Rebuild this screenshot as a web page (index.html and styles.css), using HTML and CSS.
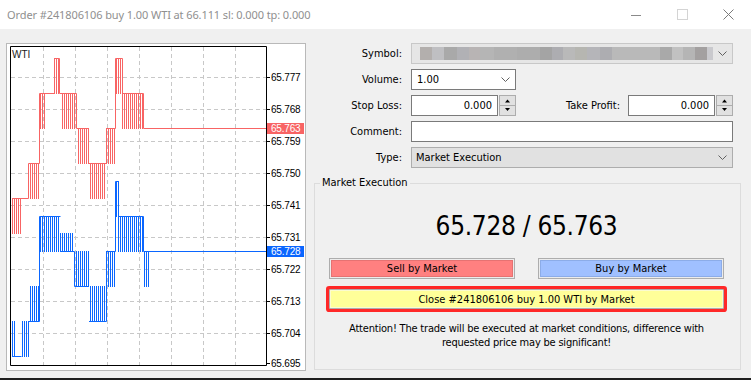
FILE: index.html
```html
<!DOCTYPE html>
<html lang="en">
<head>
  <meta charset="UTF-8">
  <title>Order #241806106</title>
  <link rel="stylesheet" href="styles.css">
</head>
<body>

<div class="titlebar">
  <span class="title">Order #241806106 buy 1.00 WTI at 66.111 sl: 0.000 tp: 0.000</span>
  <div class="caption-buttons">
    <span class="caption-btn"><svg width="10" height="10" viewBox="0 0 10 10"><path d="M0 5.5h10" stroke="#8a8a8a"/></svg></span>
    <span class="caption-btn"><svg width="11" height="11" viewBox="0 0 11 11"><rect x="0.5" y="0.5" width="10" height="10" fill="none" stroke="#d4d4d4"/></svg></span>
    <span class="caption-btn"><svg width="11" height="11" viewBox="0 0 11 11"><path d="M0.5 0.5l10 10M10.5 0.5l-10 10" stroke="#7a7a7a"/></svg></span>
  </div>
</div>

<div class="main">
  <!-- tick chart -->
  <div class="chart-panel">
    <svg width="298" height="326" viewBox="7 44 298 326">
      <defs>
        <pattern id="askBars" width="2" height="2" patternUnits="userSpaceOnUse"><rect width="1" height="2" fill="#f86464"/></pattern>
        <pattern id="bidBars" width="2" height="2" patternUnits="userSpaceOnUse"><rect width="1" height="2" fill="#0a66ff"/></pattern>
      </defs>
      <path class="grid" d="M43.5 47V365M75.5 47V365M107.5 47V365M139.5 47V365M171.5 47V365M203.5 47V365M235.5 47V365M11 77.5H266M11 109.5H266M11 141.5H266M11 173.5H266M11 205.5H266M11 237.5H266M11 269.5H266M11 301.5H266M11 333.5H266"/>

      <g fill="url(#askBars)">
        <rect x="12" y="198" width="10" height="36"/>
        <rect x="29" y="163" width="10" height="36"/>
        <rect x="40" y="93" width="6" height="36"/>
        <rect x="54" y="58" width="5" height="36"/>
        <rect x="62" y="93" width="14" height="36"/>
        <rect x="77" y="128" width="12" height="36"/>
        <rect x="89" y="163" width="17" height="36"/>
        <rect x="106" y="128" width="9" height="36"/>
        <rect x="115" y="58" width="7" height="36"/>
        <rect x="122" y="93" width="21" height="36"/>
      </g>
      <path class="ask-line" d="M12 198.5H28.5V163.5H39.5V93.5H54.5V58.5H59.5V93.5H76.5V128.5H88.5V163.5H106.5V128.5H115.5V58.5H122.5V93.5H143.5V128.5H267"/>

      <g fill="url(#bidBars)">
        <rect x="12" y="321" width="4" height="36"/>
        <rect x="21" y="321" width="8" height="36"/>
        <rect x="29" y="286" width="11" height="36"/>
        <rect x="40" y="216" width="20" height="36"/>
        <rect x="60" y="233" width="14" height="19"/>
        <rect x="75" y="251" width="14" height="36"/>
        <rect x="89" y="286" width="17" height="36"/>
        <rect x="106" y="251" width="9" height="36"/>
        <rect x="115" y="181" width="4" height="36"/>
        <rect x="118" y="216" width="25" height="36"/>
        <rect x="143" y="251" width="7" height="36"/>
      </g>
      <path class="bid-line" d="M12 356.5H21.5M28.5 356.5V321.5H39.5V216.5H60.5M60.5 251.5H74.5V286.5H88.5M89 321.5H106.5V251.5H115.5V181.5H118.5V216.5H143.5V251.5H267"/>

      <path class="frame" d="M10.5 46.5H266.5V365.5H10.5Z"/>
      <path class="ticks" d="M267 77.5h3M267 109.5h3M267 141.5h3M267 173.5h3M267 205.5h3M267 237.5h3M267 269.5h3M267 301.5h3M267 333.5h3M267 363.5h3"/>

      <text class="symbol-name" x="12" y="58">WTI</text>

      <text class="axis-label" x="271" y="81">65.777</text>
      <text class="axis-label" x="271" y="113">65.768</text>
      <text class="axis-label" x="271" y="145">65.759</text>
      <text class="axis-label" x="271" y="177">65.750</text>
      <text class="axis-label" x="271" y="209">65.741</text>
      <text class="axis-label" x="271" y="241">65.731</text>
      <text class="axis-label" x="271" y="273">65.722</text>
      <text class="axis-label" x="271" y="305">65.713</text>
      <text class="axis-label" x="271" y="337">65.704</text>
      <text class="axis-label" x="271" y="367">65.695</text>

      <rect class="ask-tag" x="267" y="123" width="37" height="11"/>
      <text class="axis-label tag-text" x="271" y="132">65.763</text>
      <rect class="bid-tag" x="267" y="246" width="37" height="11"/>
      <text class="axis-label tag-text" x="271" y="255">65.728</text>
    </svg>
  </div>

  <div class="order-side">
    <div class="fields">
      <div class="field-label">Symbol:</div>
      <div class="combo combo-locked">
        <span class="mosaic"></span>
        <svg class="chevron" viewBox="0 0 9 5"><path d="M0.5 0.5l4 4 4-4"/></svg>
      </div>

      <div class="field-label">Volume:</div>
      <div class="combo combo-short">
        <span class="combo-value">1.00</span>
        <svg class="chevron" viewBox="0 0 9 5"><path d="M0.5 0.5l4 4 4-4"/></svg>
      </div>

      <div class="field-label">Stop Loss:</div>
      <div class="stop-row">
        <div class="spin-box">
          <span class="spin-value">0.000</span>
          <span class="spinner">
            <svg viewBox="0 0 15 8"><path d="M5 6h5L7.5 3z"/></svg>
            <svg viewBox="0 0 15 8"><path d="M5 2h5L7.5 5z"/></svg>
          </span>
        </div>
        <div class="tp-group">
          <span>Take Profit:</span>
          <div class="spin-box">
            <span class="spin-value">0.000</span>
            <span class="spinner">
              <svg viewBox="0 0 15 8"><path d="M5 6h5L7.5 3z"/></svg>
              <svg viewBox="0 0 15 8"><path d="M5 2h5L7.5 5z"/></svg>
            </span>
          </div>
        </div>
      </div>

      <div class="field-label">Comment:</div>
      <div class="text-box"></div>

      <div class="field-label">Type:</div>
      <div class="combo combo-type">
        <span class="combo-value">Market Execution</span>
        <svg class="chevron" viewBox="0 0 9 5"><path d="M0.5 0.5l4 4 4-4"/></svg>
      </div>
    </div>

    <fieldset class="exec-group">
      <legend>Market Execution</legend>
      <div class="price">65.728 / 65.763</div>
      <div class="trade-buttons">
        <button class="trade-btn sell">Sell by Market</button>
        <button class="trade-btn buy">Buy by Market</button>
      </div>
      <button class="close-btn">Close #241806106 buy 1.00 WTI by Market</button>
      <div class="attention">Attention! The trade will be executed at market conditions, difference with<br>requested price may be significant!</div>
    </fieldset>
  </div>
</div>

<div class="taskbar-edge"></div>

</body>
</html>
```

FILE: styles.css
```css
* {
  box-sizing: border-box;
}
body {
  margin: 0;
  width: 751px;
  height: 380px;
  overflow: hidden;
  background: #f0f0f0;
  font: 11px "DejaVu Sans Condensed", "DejaVu Sans", sans-serif;
  color: #000;
}

/* title bar */
.titlebar {
  height: 29px;
  background: #fff;
  display: flex;
  justify-content: space-between;
}
.title {
  padding: 7px 0 0 7px;
  font: 11px "Noto Sans", sans-serif;
  letter-spacing: -0.1px;
  color: #8f8f8f;
}
.caption-buttons {
  display: flex;
}
.caption-btn {
  width: 46px;
  display: flex;
  align-items: center;
  justify-content: center;
}

.main {
  display: flex;
  align-items: flex-start;
  height: 349px;
  padding: 14px 0 0 6px;
}

/* chart */
.chart-panel {
  width: 300px;
  height: 328px;
  border: 1px solid #b9b9b9;
  background: #fff;
}
.chart-panel svg {
  display: block;
}
.grid {
  fill: none;
  stroke: #c8c8c8;
  stroke-dasharray: 4 3;
}
.frame, .ticks {
  fill: none;
  stroke: #000;
}
.ask-line {
  fill: none;
  stroke: #f86464;
}
.bid-line {
  fill: none;
  stroke: #0a66ff;
}
.ask-tag {
  fill: #f86464;
}
.bid-tag {
  fill: #0a66ff;
}
.axis-label {
  font: 10px "Liberation Sans", sans-serif;
  letter-spacing: -0.2px;
  fill: #000;
}
.tag-text {
  fill: #fff;
}
.symbol-name {
  font: 10px "Liberation Sans", sans-serif;
  fill: #1a1a1a;
}

/* order form */
.order-side {
  margin-left: 8px;
  width: 427px;
}
.fields {
  display: grid;
  grid-template-columns: 88px 322px;
  grid-auto-rows: 21px;
  column-gap: 9px;
  row-gap: 5px;
  align-items: center;
}
.field-label {
  text-align: right;
  white-space: nowrap;
}
.combo {
  height: 21px;
  display: flex;
  align-items: center;
  border: 1px solid #7a7a7a;
  background: #fff;
  padding: 0 5px 0 5px;
}
.combo-value {
  flex: 1;
}
.combo-short {
  width: 105px;
}
.combo-locked {
  background: #e6e6e6;
  border-color: #c8c8c8;
  padding-left: 8px;
}
.combo-type {
  background: #e1e1e1;
  border-color: #adadad;
  padding-left: 4px;
}
.mosaic {
  flex: 1;
  height: 13px;
  margin-right: 5px;
  background: linear-gradient(to right, #b3afad 0 12px, #bfbfc2 12px 24px, #a9a9a9 24px 37px, #b1b1b5 37px 49px, #b8b4b4 49px 60px, #b5b5b5 60px 74px, #b0b0b0 74px 97px, #adadad 97px 120px, #a4a4a4 120px 132px, #adadb1 132px 143px, #b9b9b9 143px 155px, #b6b6b1 155px 167px, #b5b5b9 167px 180px, #adadb1 180px 192px, #b9b9b9 192px 240px, #a9a9a9 240px 252px, #c1c1c1 252px 263px, #b5b5b5 263px 275px, #a3a0a0 275px 287px, #c9c9cd 287px 295px);
}
.chevron {
  width: 9px;
  height: 5px;
  fill: none;
  stroke: #606060;
}
.stop-row {
  display: flex;
  justify-content: space-between;
  align-items: center;
}
.tp-group {
  display: flex;
  align-items: center;
  gap: 8px;
}
.spin-box {
  display: flex;
  width: 105px;
  height: 21px;
}
.spin-value {
  flex: 1;
  border: 1px solid #7a7a7a;
  background: #fff;
  text-align: right;
  padding-right: 5px;
  line-height: 19px;
}
.spinner {
  width: 17px;
  margin-left: 1px;
  border: 1px solid #adadad;
  background: #e1e1e1;
  display: flex;
  flex-direction: column;
}
.spinner svg {
  display: block;
  width: 15px;
  height: 9px;
  fill: #000;
}
.spinner svg + svg {
  border-top: 1px solid #adadad;
}
.text-box {
  height: 21px;
  border: 1px solid #7a7a7a;
  background: #fff;
}

/* market execution group */
.exec-group {
  margin: 7px 0 0;
  padding: 0 16px 0 14px;
  border: 1px solid #dcdcdc;
  height: 195px;
  min-width: 0;
}
.exec-group legend {
  padding: 0 2px;
  margin-left: -9px;
  line-height: 16px;
}
.price {
  margin-top: 20px;
  text-align: center;
  font-size: 26px;
  letter-spacing: -0.3px;
  line-height: 30px;
}
.trade-buttons {
  margin-top: 17px;
  display: flex;
  justify-content: space-between;
}
button {
  font: inherit;
  color: #000;
  padding: 0;
  cursor: pointer;
}
.trade-btn {
  width: 186px;
  height: 21px;
  border: 1px solid #adadad;
}
.sell {
  background: #ff8080;
  box-shadow: inset 0 0 0 1px #ececec, inset 0 0 0 2px #e67272;
}
.buy {
  background: #a0c0ff;
  box-shadow: inset 0 0 0 1px #ececec, inset 0 0 0 2px #8cace8;
}
.close-btn {
  display: block;
  margin-top: 10px;
  width: 100%;
  height: 20px;
  border: 1px solid #adadad;
  border-radius: 1px;
  background: #ffff99;
  box-shadow: 0 0 0 3px #ff2828, inset 0 0 0 1px #fbfbd0;
}
.attention {
  margin-top: 13px;
  text-align: center;
  line-height: 14px;
  letter-spacing: -0.2px;
}

.taskbar-edge {
  height: 2px;
  background: #1f1f1f;
}
```
